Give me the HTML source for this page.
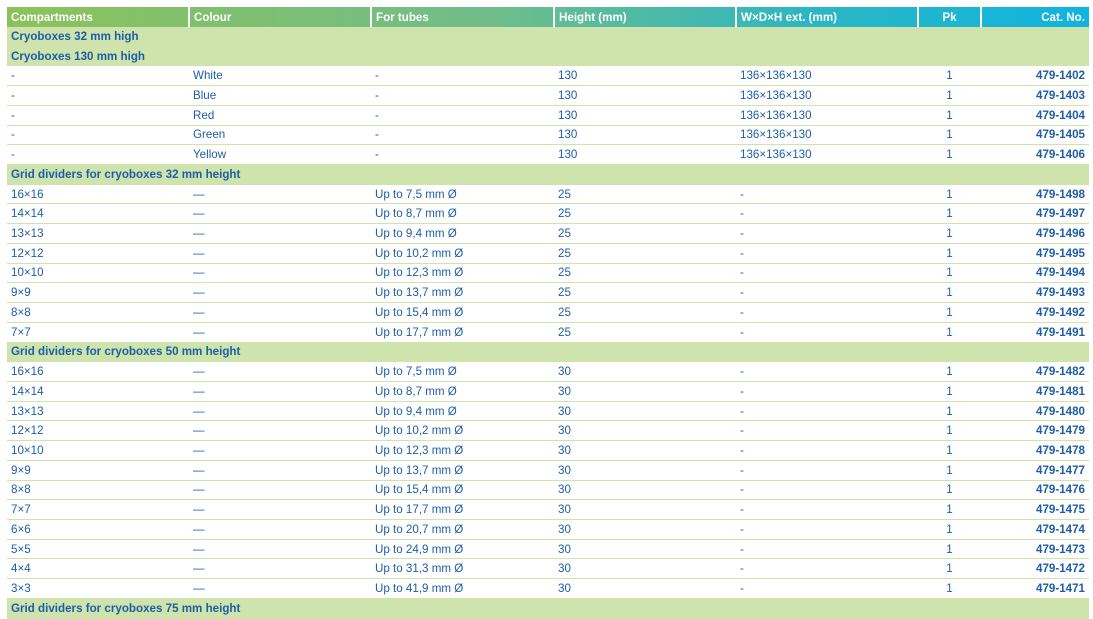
<!DOCTYPE html>
<html><head><meta charset="utf-8"><style>
html,body{margin:0;padding:0;background:#fff;width:1093px;height:617px;overflow:hidden}
table{position:absolute;left:7px;top:7px;width:1082px;border-collapse:collapse;table-layout:fixed;font-family:"Liberation Sans",sans-serif;font-size:11.6px;color:#1d5ea6}
th{height:20px;padding:0 0 0 4px;color:#fff;font-weight:bold;text-align:left;border-left:2px solid #fff;font-size:11.6px}
th:first-child{border-left:none}
thead tr{background:linear-gradient(90deg,#8cc25a 0%,#6fbd8a 45%,#2ab6c4 75%,#10b4e0 100%)}
td{height:18.72px;padding:0 0 0 4px;border-bottom:1px solid #cfe3ad;white-space:nowrap;line-height:17px;vertical-align:middle}
tr.g td{background:#cfe3ad;font-weight:bold;border-bottom:1px solid #cfe3ad}
td.c,th.c{text-align:center;padding-left:0}
td.r,th.r{text-align:right;padding-left:0;padding-right:4px}
td.r{font-weight:bold}
</style></head><body>
<table>
<colgroup><col style="width:182px"><col style="width:182px"><col style="width:183px"><col style="width:182px"><col style="width:182px"><col style="width:63px"><col style="width:108px"></colgroup>
<thead><tr><th>Compartments</th><th>Colour</th><th>For tubes</th><th>Height (mm)</th><th>W×D×H ext. (mm)</th><th class="c">Pk</th><th class="r">Cat. No.</th></tr></thead>
<tbody>
<tr class="g"><td colspan="7">Cryoboxes 32 mm high</td></tr>
<tr class="g"><td colspan="7">Cryoboxes 130 mm high</td></tr>
<tr><td>-</td><td>White</td><td>-</td><td>130</td><td>136×136×130</td><td class="c">1</td><td class="r">479-1402</td></tr>
<tr><td>-</td><td>Blue</td><td>-</td><td>130</td><td>136×136×130</td><td class="c">1</td><td class="r">479-1403</td></tr>
<tr><td>-</td><td>Red</td><td>-</td><td>130</td><td>136×136×130</td><td class="c">1</td><td class="r">479-1404</td></tr>
<tr><td>-</td><td>Green</td><td>-</td><td>130</td><td>136×136×130</td><td class="c">1</td><td class="r">479-1405</td></tr>
<tr><td>-</td><td>Yellow</td><td>-</td><td>130</td><td>136×136×130</td><td class="c">1</td><td class="r">479-1406</td></tr>
<tr class="g"><td colspan="7">Grid dividers for cryoboxes 32 mm height</td></tr>
<tr><td>16×16</td><td>—</td><td>Up to 7,5 mm Ø</td><td>25</td><td>-</td><td class="c">1</td><td class="r">479-1498</td></tr>
<tr><td>14×14</td><td>—</td><td>Up to 8,7 mm Ø</td><td>25</td><td>-</td><td class="c">1</td><td class="r">479-1497</td></tr>
<tr><td>13×13</td><td>—</td><td>Up to 9,4 mm Ø</td><td>25</td><td>-</td><td class="c">1</td><td class="r">479-1496</td></tr>
<tr><td>12×12</td><td>—</td><td>Up to 10,2 mm Ø</td><td>25</td><td>-</td><td class="c">1</td><td class="r">479-1495</td></tr>
<tr><td>10×10</td><td>—</td><td>Up to 12,3 mm Ø</td><td>25</td><td>-</td><td class="c">1</td><td class="r">479-1494</td></tr>
<tr><td>9×9</td><td>—</td><td>Up to 13,7 mm Ø</td><td>25</td><td>-</td><td class="c">1</td><td class="r">479-1493</td></tr>
<tr><td>8×8</td><td>—</td><td>Up to 15,4 mm Ø</td><td>25</td><td>-</td><td class="c">1</td><td class="r">479-1492</td></tr>
<tr><td>7×7</td><td>—</td><td>Up to 17,7 mm Ø</td><td>25</td><td>-</td><td class="c">1</td><td class="r">479-1491</td></tr>
<tr class="g"><td colspan="7">Grid dividers for cryoboxes 50 mm height</td></tr>
<tr><td>16×16</td><td>—</td><td>Up to 7,5 mm Ø</td><td>30</td><td>-</td><td class="c">1</td><td class="r">479-1482</td></tr>
<tr><td>14×14</td><td>—</td><td>Up to 8,7 mm Ø</td><td>30</td><td>-</td><td class="c">1</td><td class="r">479-1481</td></tr>
<tr><td>13×13</td><td>—</td><td>Up to 9,4 mm Ø</td><td>30</td><td>-</td><td class="c">1</td><td class="r">479-1480</td></tr>
<tr><td>12×12</td><td>—</td><td>Up to 10,2 mm Ø</td><td>30</td><td>-</td><td class="c">1</td><td class="r">479-1479</td></tr>
<tr><td>10×10</td><td>—</td><td>Up to 12,3 mm Ø</td><td>30</td><td>-</td><td class="c">1</td><td class="r">479-1478</td></tr>
<tr><td>9×9</td><td>—</td><td>Up to 13,7 mm Ø</td><td>30</td><td>-</td><td class="c">1</td><td class="r">479-1477</td></tr>
<tr><td>8×8</td><td>—</td><td>Up to 15,4 mm Ø</td><td>30</td><td>-</td><td class="c">1</td><td class="r">479-1476</td></tr>
<tr><td>7×7</td><td>—</td><td>Up to 17,7 mm Ø</td><td>30</td><td>-</td><td class="c">1</td><td class="r">479-1475</td></tr>
<tr><td>6×6</td><td>—</td><td>Up to 20,7 mm Ø</td><td>30</td><td>-</td><td class="c">1</td><td class="r">479-1474</td></tr>
<tr><td>5×5</td><td>—</td><td>Up to 24,9 mm Ø</td><td>30</td><td>-</td><td class="c">1</td><td class="r">479-1473</td></tr>
<tr><td>4×4</td><td>—</td><td>Up to 31,3 mm Ø</td><td>30</td><td>-</td><td class="c">1</td><td class="r">479-1472</td></tr>
<tr><td>3×3</td><td>—</td><td>Up to 41,9 mm Ø</td><td>30</td><td>-</td><td class="c">1</td><td class="r">479-1471</td></tr>
<tr class="g"><td colspan="7">Grid dividers for cryoboxes 75 mm height</td></tr>
</tbody></table>
</body></html>
